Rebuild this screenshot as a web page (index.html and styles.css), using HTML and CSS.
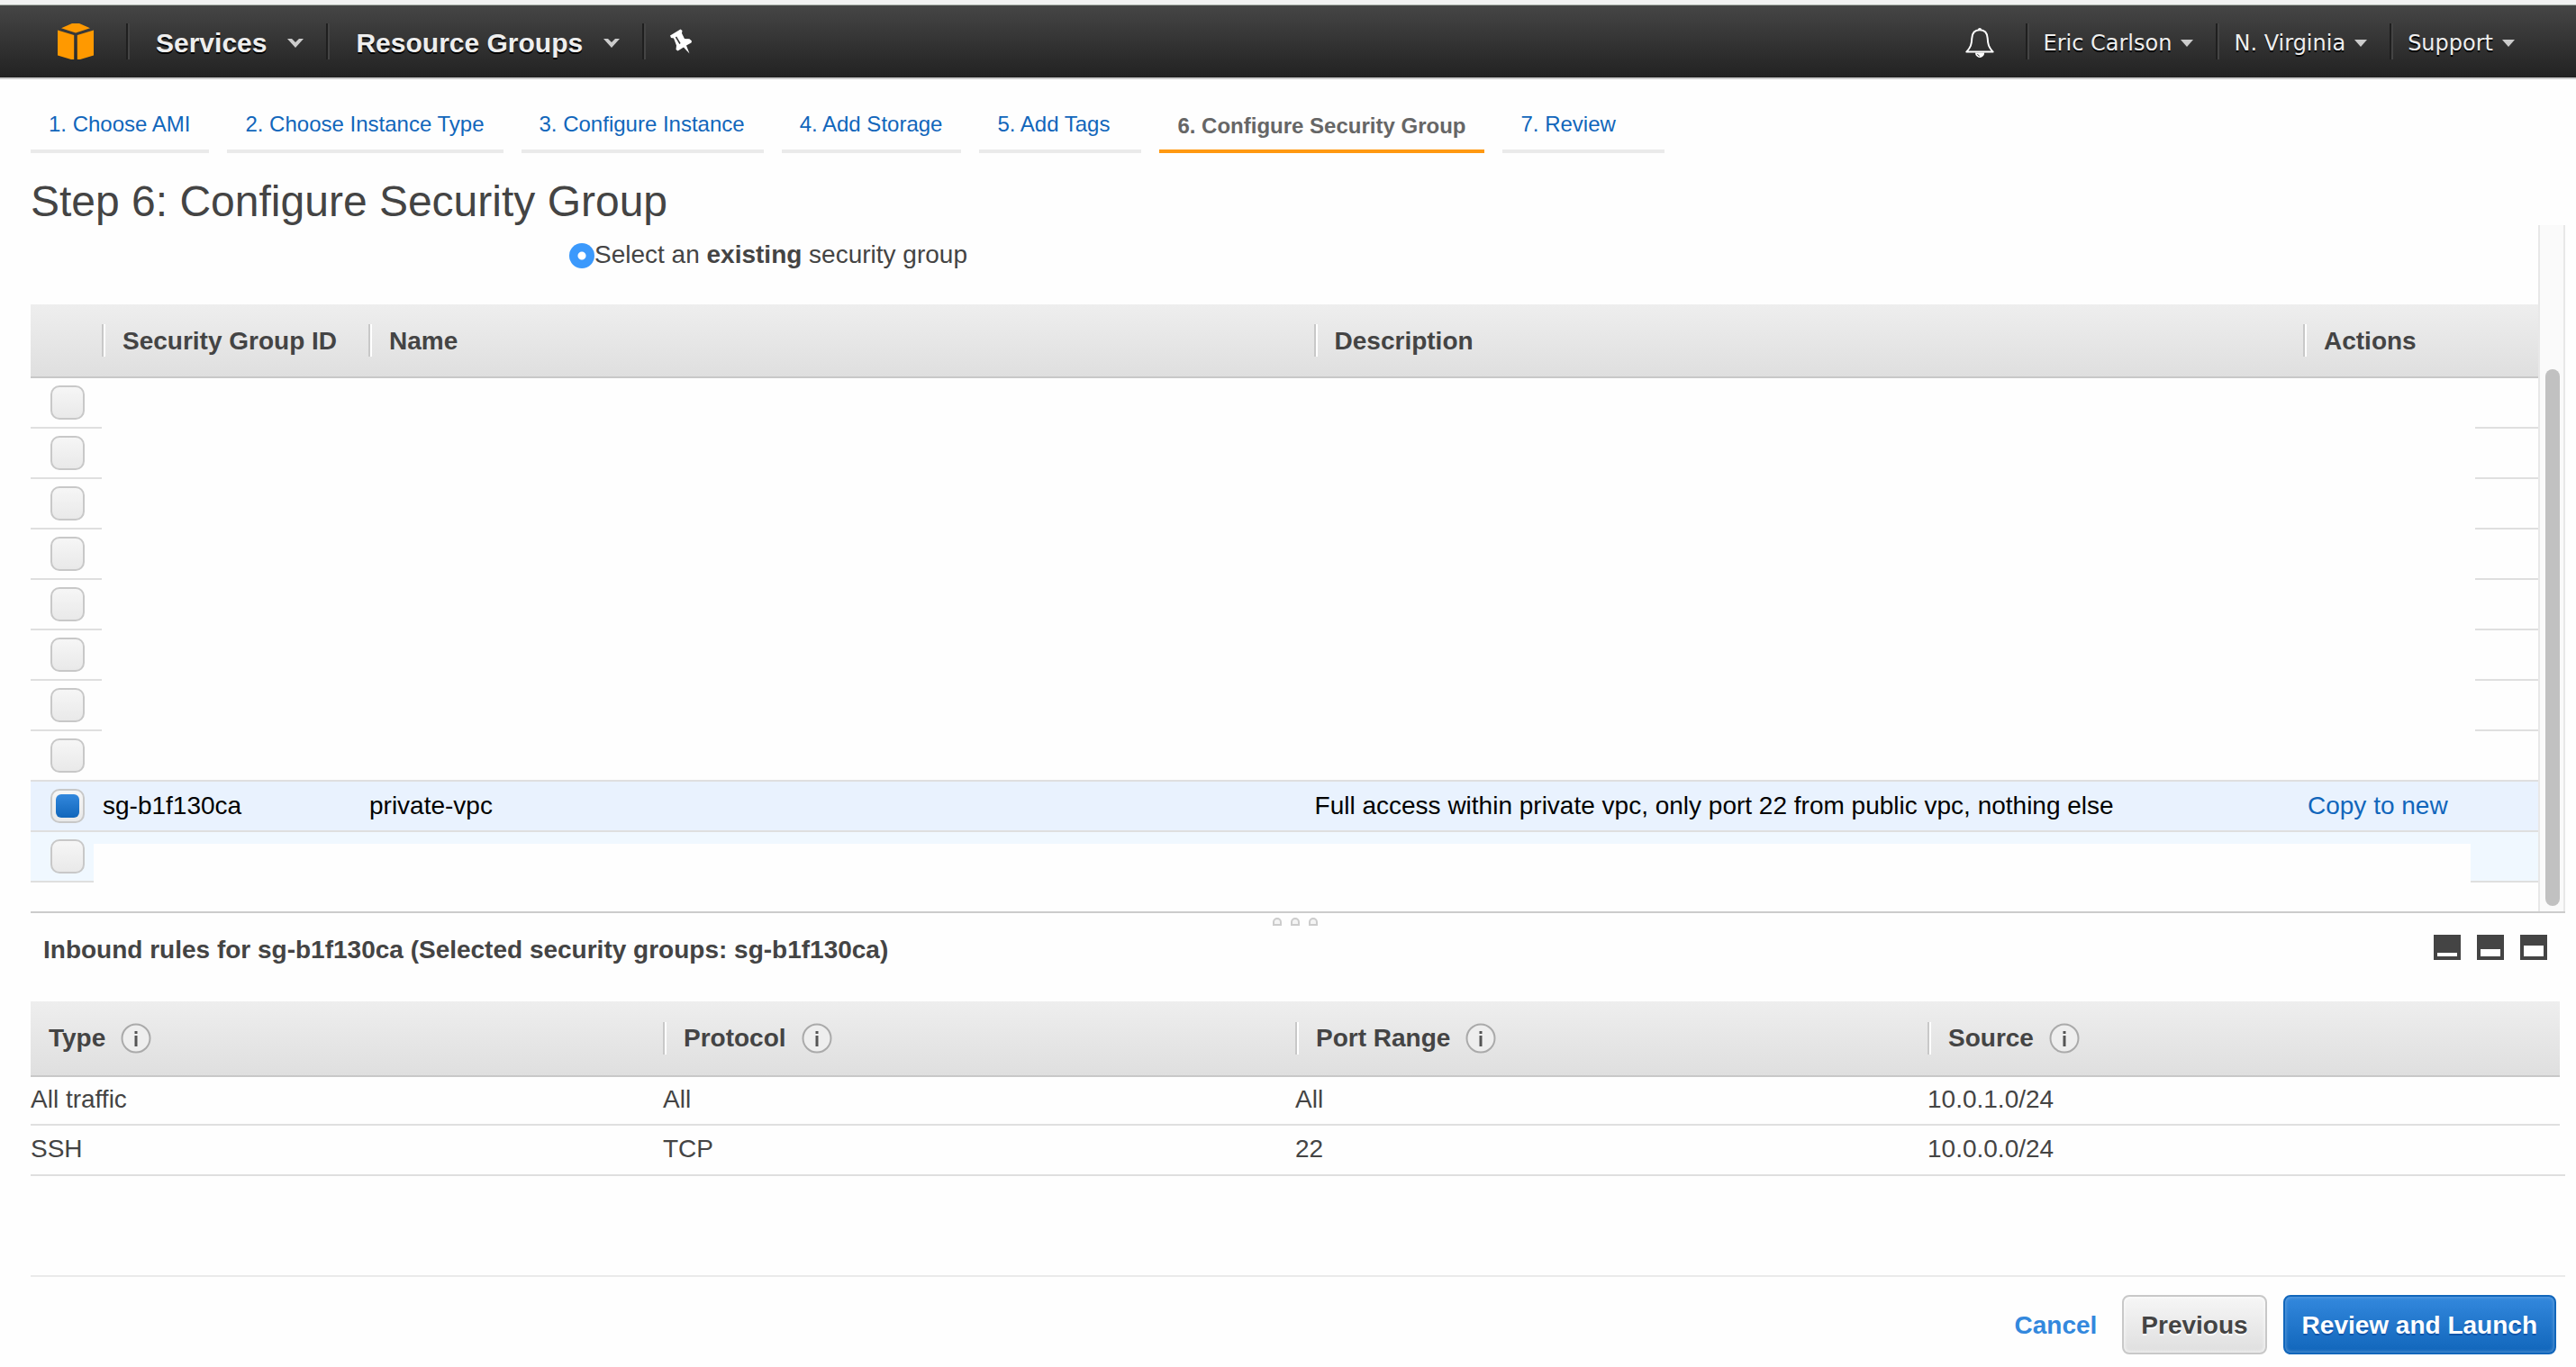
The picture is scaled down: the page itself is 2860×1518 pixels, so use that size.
FILE: index.html
```html
<!DOCTYPE html>
<html lang="en">
<head>
<meta charset="utf-8">
<title>Step 6: Configure Security Group</title>
<link rel="stylesheet" href="styles.css">
</head>
<body>
<header class="topbar">
  <a class="logo" href="#" aria-label="Home">
    <svg width="40" height="40" viewBox="0 0 40 40" fill="#ff9900"><path d="M4 5.200 16 0h8l12 5.200L20 10.500z"/><path d="M0 7.500 18.200 13v27H15L0 35.500z"/><path d="M40 7.500 21.800 13v27H25l15-4.500z"/></svg>
  </a>
  <nav class="menu menu-main" aria-label="Main">
    <button class="menu-item" type="button">Services
      <svg class="caret" width="18" height="10" viewBox="0 0 18 10"><path d="M0 0h5l4 4 4-4h5L9 10z" fill="#ccc"/></svg>
    </button>
    <button class="menu-item" type="button">Resource Groups
      <svg class="caret" width="18" height="10" viewBox="0 0 18 10"><path d="M0 0h5l4 4 4-4h5L9 10z" fill="#ccc"/></svg>
    </button>
    <button class="menu-item pin" type="button" aria-label="Pin shortcuts">
      <svg width="24" height="28" viewBox="0 0 24 28"><path d="M0 7.500 11.500.500 13.500 2 13 5l3 6 5.500.200L24 13.500l-.500 2L18 18.500l3.500 9L15 20.500l-6.500 4-2-1.500.500-4.500L4 10.500 1 10z" fill="#fff"/><path d="m6.500 9 4.500 7.500" stroke="#333" stroke-width="1.500"/></svg>
    </button>
  </nav>
  <nav class="menu menu-user" aria-label="Account">
    <button class="menu-item bell" type="button" aria-label="Notifications">
      <svg width="32" height="34" viewBox="0 0 32 34"><path d="M14 3a2 2 0 0 1 4 0" fill="#fff"/><path d="M16 3.200C10.500 3.200 7.600 7 7.300 12.500 7 19.500 6 22.500 1.300 27.600h29.400C26 22.500 25 19.500 24.700 12.500 24.400 7 21.500 3.200 16 3.200z" fill="none" stroke="#fff" stroke-width="2" stroke-linejoin="round"/><path d="M11 28.500h10.200a5.100 5.400 0 0 1-10.200 0z" fill="#fff"/><path d="M13.500 30c.500 1.200 1.300 2 2.300 2.200" stroke="#333" fill="none"/></svg>
    </button>
    <button class="menu-item" type="button">Eric Carlson
      <svg class="caret" width="14" height="8" viewBox="0 0 14 8"><path d="M0 0h14L7 8z" fill="#ccc"/></svg>
    </button>
    <button class="menu-item" type="button">N. Virginia
      <svg class="caret" width="14" height="8" viewBox="0 0 14 8"><path d="M0 0h14L7 8z" fill="#ccc"/></svg>
    </button>
    <button class="menu-item" type="button">Support
      <svg class="caret" width="14" height="8" viewBox="0 0 14 8"><path d="M0 0h14L7 8z" fill="#ccc"/></svg>
    </button>
  </nav>
</header>

<main class="page">
  <nav class="steps" aria-label="Wizard steps">
    <a class="step" href="#">1. Choose AMI</a>
    <a class="step" href="#">2. Choose Instance Type</a>
    <a class="step" href="#">3. Configure Instance</a>
    <a class="step" href="#">4. Add Storage</a>
    <a class="step" href="#">5. Add Tags</a>
    <a class="step step-active" href="#" aria-current="step">6. Configure Security Group</a>
    <a class="step" href="#">7. Review</a>
  </nav>
  <h1 class="title">Step 6: Configure Security Group</h1>

  <section class="groups">
    <div class="groups-body">
      <div class="assign">
        <input class="radio" type="radio" id="existing" name="assign" checked>
        <label for="existing">Select an <b>existing</b> security group</label>
      </div>
      <table class="grid grid-groups">
        <colgroup><col class="c-check"><col class="c-id"><col class="c-name"><col><col class="c-action"><col class="c-end"></colgroup>
        <thead>
          <tr><th></th><th scope="col">Security Group ID</th><th scope="col">Name</th><th scope="col">Description</th><th scope="col" colspan="2">Actions</th></tr>
        </thead>
        <tbody>
          <tr><td><input class="check" type="checkbox" aria-label="Select group 1"></td><td class="blank" colspan="4"></td><td></td></tr>
          <tr><td><input class="check" type="checkbox" aria-label="Select group 2"></td><td class="blank" colspan="4"></td><td></td></tr>
          <tr><td><input class="check" type="checkbox" aria-label="Select group 3"></td><td class="blank" colspan="4"></td><td></td></tr>
          <tr><td><input class="check" type="checkbox" aria-label="Select group 4"></td><td class="blank" colspan="4"></td><td></td></tr>
          <tr><td><input class="check" type="checkbox" aria-label="Select group 5"></td><td class="blank" colspan="4"></td><td></td></tr>
          <tr><td><input class="check" type="checkbox" aria-label="Select group 6"></td><td class="blank" colspan="4"></td><td></td></tr>
          <tr><td><input class="check" type="checkbox" aria-label="Select group 7"></td><td class="blank" colspan="4"></td><td></td></tr>
          <tr><td><input class="check" type="checkbox" aria-label="Select group 8"></td><td colspan="4"></td><td></td></tr>
          <tr class="selected"><td><input class="check" type="checkbox" aria-label="Select sg-b1f130ca" checked></td><td>sg-b1f130ca</td><td>private-vpc</td><td>Full access within private vpc, only port 22 from public vpc, nothing else</td><td class="action" colspan="2"><a href="#">Copy to new</a></td></tr>
          <tr class="hovered"><td><input class="check" type="checkbox" aria-label="Select group 10"></td><td class="covered" colspan="4"></td><td></td></tr>
        </tbody>
      </table>
    </div>
    <div class="scrollbar"><div class="thumb"></div></div>
  </section>

  <section class="details">
    <div class="splitter">
      <svg width="52" height="14" viewBox="0 0 52 14" fill="#f4f4f4" stroke="#ccc" stroke-width="2"><path d="M2 13V10a4 4 0 0 1 8 0v3zM22 13V10a4 4 0 0 1 8 0v3zM42 13V10a4 4 0 0 1 8 0v3z"/></svg>
    </div>
    <div class="details-head">
      <h2 class="subtitle">Inbound rules for sg-b1f130ca (Selected security groups: sg-b1f130ca)</h2>
      <div class="sizes">
        <button class="size" type="button" aria-label="Small pane"><svg width="30" height="28" viewBox="0 0 30 28"><path d="M0 0h30v28H0z" fill="#444"/><path d="M4 20h22v4H4z" fill="#fff"/></svg></button>
        <button class="size" type="button" aria-label="Medium pane"><svg width="30" height="28" viewBox="0 0 30 28"><path d="M0 0h30v28H0z" fill="#444"/><path d="M4 16h22v8H4z" fill="#fff"/></svg></button>
        <button class="size" type="button" aria-label="Large pane"><svg width="30" height="28" viewBox="0 0 30 28"><path d="M0 0h30v28H0z" fill="#444"/><path d="M4 12h22v12H4z" fill="#fff"/></svg></button>
      </div>
    </div>
    <div class="rules">
      <table class="grid grid-rules">
        <thead>
          <tr>
            <th scope="col"><span class="head">Type <svg class="info" width="34" height="34" viewBox="0 0 34 34"><circle cx="17" cy="17" r="15.500"/><path d="M15.500 9h3v3h-3zM15.500 14h3v12h-3z"/></svg></span></th>
            <th scope="col"><span class="head">Protocol <svg class="info" width="34" height="34" viewBox="0 0 34 34"><circle cx="17" cy="17" r="15.500"/><path d="M15.500 9h3v3h-3zM15.500 14h3v12h-3z"/></svg></span></th>
            <th scope="col"><span class="head">Port Range <svg class="info" width="34" height="34" viewBox="0 0 34 34"><circle cx="17" cy="17" r="15.500"/><path d="M15.500 9h3v3h-3zM15.500 14h3v12h-3z"/></svg></span></th>
            <th scope="col"><span class="head">Source <svg class="info" width="34" height="34" viewBox="0 0 34 34"><circle cx="17" cy="17" r="15.500"/><path d="M15.500 9h3v3h-3zM15.500 14h3v12h-3z"/></svg></span></th>
          </tr>
        </thead>
        <tbody>
          <tr><td>All traffic</td><td>All</td><td>All</td><td>10.0.1.0/24</td></tr>
          <tr><td>SSH</td><td>TCP</td><td>22</td><td>10.0.0.0/24</td></tr>
        </tbody>
      </table>
    </div>
  </section>

  <footer class="actions">
    <a class="cancel" href="#">Cancel</a>
    <button class="btn" type="button">Previous</button>
    <button class="btn btn-primary" type="button">Review and Launch</button>
  </footer>
</main>
</body>
</html>
```
FILE: styles.css
```css
* { box-sizing: border-box; }

body {
  margin: 0;
  min-height: 100vh;
  display: flex;
  flex-direction: column;
  background: #fefefe;
  color: #444;
  font: 28px/32px "Liberation Sans", Arial, sans-serif;
}

a { color: #1166bb; text-decoration: none; }
button { font: inherit; color: inherit; border: 0; background: none; padding: 0; cursor: pointer; }
svg { display: block; flex: none; }

/* Top bar */
.topbar {
  display: flex;
  align-items: center;
  height: 88px;
  padding: 0 68px 0 64px;
  border-top: 5px solid #f2f2f2;
  border-bottom: 2px solid #ccc;
  background: linear-gradient(#464646, #222);
  box-shadow: inset 0 1px #aab2aa;
  color: #eee;
}
.logo { margin-right: 36px; }
.menu { display: flex; align-items: center; }
.menu-user { margin-left: auto; font-family: "DejaVu Sans", Verdana, sans-serif; font-size: 24px; }
.menu-main { font-size: 30px; font-weight: bold; }
.menu-item {
  display: flex;
  align-items: center;
  gap: 10px;
  height: 40px;
  padding: 4px 25px 0 20px;
  background: linear-gradient(90deg, #1f1f1f 2px, #444 2px) left / 4px 100% no-repeat;
  text-shadow: 0 2px #000;
  white-space: nowrap;
}
.menu-main .menu-item { gap: 23px; padding: 4px 25px 0 33px; }
.menu-main .pin { padding: 0 31px; }
.menu-user .bell { padding: 2px 35px 0 0; background: none; }
.menu-user .menu-item:last-child { padding-right: 0; }

/* Wizard steps */
.page { flex: 1; display: flex; flex-direction: column; padding: 20px 12px 0 34px; }
.steps { display: flex; gap: 20px; font-size: 24px; }
.step {
  min-width: 180px;
  height: 62px;
  padding: 0 21px 0 20px;
  border-bottom: 4px solid #eaeaea;
  line-height: 60px;
  white-space: nowrap;
}
.step-active { border-color: #ff9911; color: #666; font-weight: bold; line-height: 64px; }
.title { margin: 0; padding-top: 28px; font-size: 48px; font-weight: normal; line-height: 52px; }

/* Security groups pane */
.groups { display: flex; border-bottom: 2px solid #ccc; }
.groups-body { flex: 1; min-width: 0; padding-bottom: 32px; }
.assign { display: flex; align-items: center; height: 64px; margin-bottom: 24px; padding: 2px 0 0 598px; }
.radio {
  appearance: none;
  width: 28px;
  height: 28px;
  margin: 2px 0 0;
  border-radius: 50%;
  background: radial-gradient(circle, #fff 4px, #3b99fc 5px);
}
.scrollbar {
  width: 30px;
  padding: 160px 4px 6px 6px;
  border: 2px solid #e8e8e8;
  border-width: 0 2px;
  background: #fafafa;
}
.thumb { height: 100%; border-radius: 8px; background: #c1c1c1; }

/* Data tables */
.grid { width: 100%; table-layout: fixed; border-collapse: separate; border-spacing: 0; }
.grid th {
  height: 82px;
  padding: 2px 0 0 23px;
  border-bottom: 2px solid #c8c8c8;
  background:
    linear-gradient(90deg, #c8c8c8 2px, #fff 2px) left / 4px 36px no-repeat,
    linear-gradient(#eee, #dfdfdf);
  text-align: left;
}
.grid th:first-child { background: linear-gradient(#eee, #dfdfdf); }
.grid td { height: 56px; padding: 0; border-bottom: 2px solid #dfdfdf; }
.c-check { width: 79px; }
.c-id { width: 296px; }
.c-name { width: 37.7%; }
.c-action { width: 191px; }
.c-end { width: 70px; }
.selected td + td { padding-left: 1px; }
.grid .blank { border-bottom-color: transparent; }
.grid .action { padding-left: 5px; }
.selected { background: #e9f2fe; color: #000; }
.hovered { background: #f0f8ff; }
.covered { position: relative; }
.covered::after { content: ""; position: absolute; inset: 13px 5px -2px -9px; background: #fefefe; }

.check {
  appearance: none;
  display: grid;
  width: 38px;
  height: 38px;
  margin: 0 0 0 22px;
  padding: 4px;
  border: 2px solid #c8c8c8;
  border-radius: 10px;
  background: linear-gradient(#f6f6f6, #e9e9e9);
}
.check:checked::before {
  content: "";
  border-radius: 6px;
  background: linear-gradient(#3388dd, #1166bb);
}

/* Rule details pane */
.details { flex: 1; }
.splitter { display: flex; justify-content: center; height: 14px; padding-right: 6px; }
.details-head { display: flex; align-items: center; justify-content: space-between; height: 52px; margin-bottom: 32px; padding: 0 20px 0 14px; }
.subtitle { margin: 0; padding-top: 2px; font-size: 28px; }
.sizes { display: flex; gap: 18px; padding-bottom: 4px; }
.rules { padding-right: 6px; border-bottom: 2px solid #dfdfdf; }
.grid-rules th { height: 84px; padding-top: 0; }
.grid-rules th:first-child { padding-left: 20px; }
.grid-rules td { height: 54px; padding-bottom: 2px; }
.grid-rules tr:last-child td { border-bottom: 0; }
.head { display: flex; align-items: center; gap: 17px; line-height: 34px; }

.info circle { fill: #eee; stroke: #aaa; stroke-width: 2; }
.info path { fill: #555; }

/* Footer buttons */
.actions {
  display: flex;
  align-items: flex-start;
  justify-content: flex-end;
  gap: 18px;
  height: 102px;
  padding: 20px 10px 0 0;
  border-top: 2px solid #eaeaea;
  font-weight: bold;
}
.cancel { margin-right: 10px; color: #3388dd; line-height: 68px; }
.btn {
  height: 66px;
  padding: 2px 19px 0;
  border: 2px solid #c8c8c8;
  border-radius: 8px;
  background: linear-gradient(#f6f6f6, #dfdfdf);
  box-shadow: inset 0 0 4px #fff;
  text-shadow: 0 2px #fff;
}
.btn-primary {
  border-color: #1166bb;
  background: linear-gradient(#3388dd, #1166bb);
  box-shadow: inset 0 0 4px #77aadd;
  color: #fff;
  text-shadow: 0 2px #1155aa;
}
```
